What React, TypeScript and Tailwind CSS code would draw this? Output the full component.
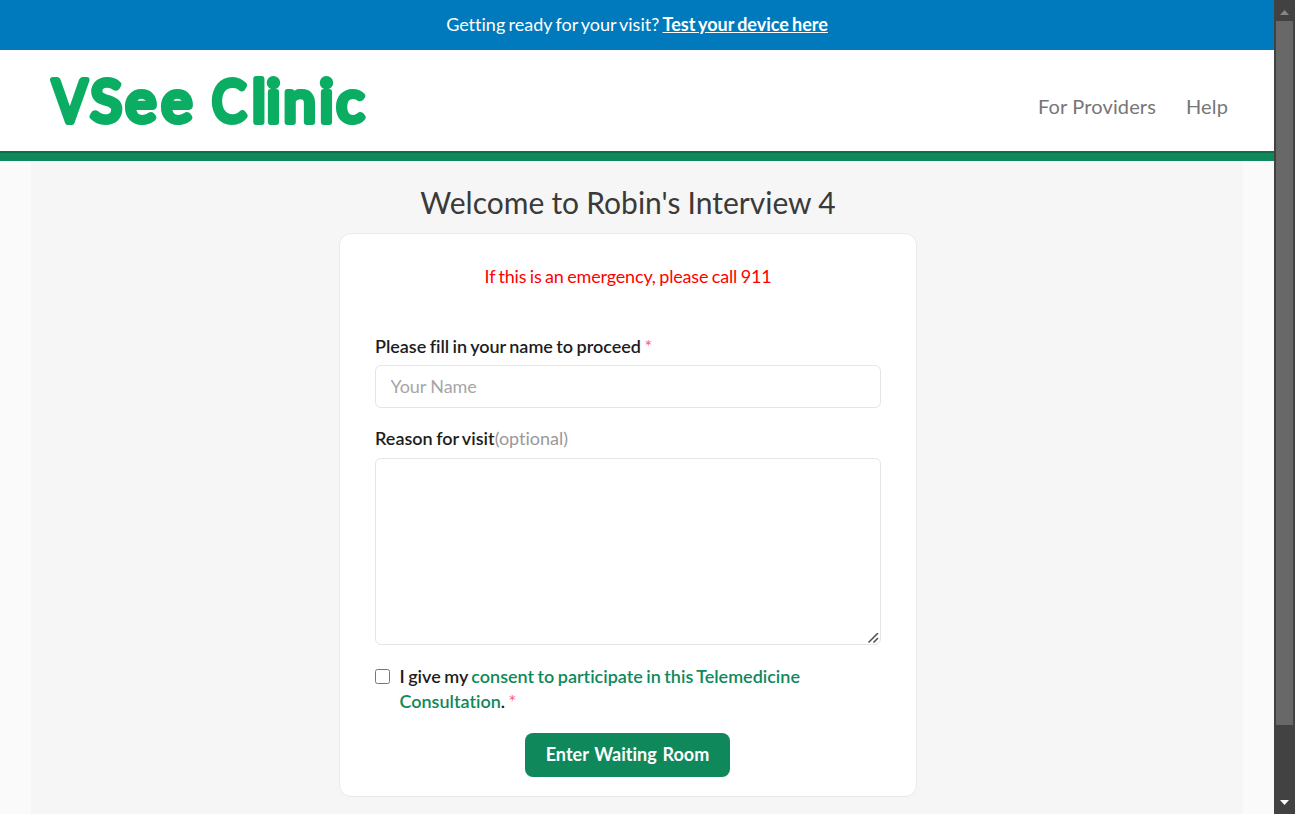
import React from "react";

function Logo() {
  return (
    <svg
      className="block h-[84px] w-[330px] overflow-visible"
      viewBox="0 0 330 84"
      fill="#0aad62"
      stroke="#0aad62"
      strokeWidth="6"
      strokeLinejoin="round"
      strokeLinecap="round"
      fontFamily="Lato, sans-serif"
      fontWeight="400"
      fontSize="58"
      role="img"
      aria-label="VSee Clinic"
    >
      <text transform="translate(4.500 62) scale(0.88 1)">V</text>
      <text x="42.500 77.500 113.500" y="62">See</text>
      <text transform="translate(164 62) scale(0.88 1)">C</text>
      <text x="204 218.500 235.500 271.500 288.500" y="62">linic</text>
    </svg>
  );
}

function Scrollbar() {
  return (
    <div className="flex h-full w-[21px] shrink-0 flex-col items-center bg-[#424242]">
      <div className="flex h-[21px] w-full items-center justify-center pt-[3px]">
        <svg width="9" height="5" viewBox="0 0 9 5" fill="#868686">
          <path d="M4.5 0 9 5H0Z" />
        </svg>
      </div>
      <div className="h-[704px] w-[17px] bg-[#686868]" />
      <div className="flex-1" />
      <div className="flex h-6 w-full items-center justify-center">
        <svg width="9" height="5" viewBox="0 0 9 5" fill="#ffffff">
          <path d="M0 0h9L4.500 5Z" />
        </svg>
      </div>
    </div>
  );
}

function Required() {
  return <span className="font-normal text-[#f95c6c]">*</span>;
}

export default function App() {
  return (
    <div className="flex h-[814px] w-[1295px] overflow-hidden bg-[#fafafa] font-['Lato',sans-serif] text-lg text-[#1d1d1d] [font-variant-ligatures:no-common-ligatures]">
      <div className="flex min-w-0 flex-1 flex-col">
        <div className="flex h-[50px] shrink-0 items-center justify-center bg-[#007abc] pb-0.5 text-white [word-spacing:-1.3px]">
          <p>
            Getting ready for your visit?{" "}
            <a href="#" className="font-bold underline">Test your device here</a>
          </p>
        </div>
        <header className="flex h-[101px] shrink-0 items-start justify-between bg-white pt-[10px] pr-[46px] pl-12">
          <Logo />
          <nav className="flex gap-[30px] pt-[31px] text-xl leading-[30px] tracking-[0.13px] text-[#767676]">
            <a href="#">For Providers</a>
            <a href="#">Help</a>
          </nav>
        </header>
        <div className="h-2.5 shrink-0 border-t-2 border-[#0b6e48] bg-[#0f885c]" />
        <main className="mx-[31px] flex flex-1 flex-col items-center bg-[#f6f6f6] pr-[18px]">
          <h1 className="mt-[21px] h-[51px] text-[30px] leading-[40px] text-[#3a3a3a] [word-spacing:-0.5px]">
            Welcome to Robin's Interview 4
          </h1>
          <form className="flex h-[564px] w-[578px] shrink-0 flex-col rounded-xl border border-[#e9e9e9] bg-white px-[35px] [word-spacing:-1px]">
            <p className="mt-[29px] text-center leading-[26px] tracking-[-0.16px] text-[#ff0000]">
              If this is an emergency, please call 911
            </p>
            <label className="mt-11 leading-[26px] font-semibold tracking-[-0.02px] [font-variant-ligatures:normal]">
              Please fill in your name to proceed <Required />
            </label>
            <input
              className="mt-1.5 h-[43px] shrink-0 rounded-md border border-[#e5e5e5] px-[14.5px] pb-0.5 tracking-[-0.1px] placeholder:text-[#a6a6a6]"
              placeholder="Your Name"
            />
            <label className="mt-[17px] leading-[26px] font-semibold">
              Reason for visit<span className="font-normal text-[#999999]">(optional)</span>
            </label>
            <div className="relative mt-[7px] h-[187px] shrink-0">
              <textarea className="block h-full w-full resize-none rounded-md border border-[#e5e5e5]" />
              <svg
                className="pointer-events-none absolute right-[2px] bottom-[2px]"
                width="11"
                height="10"
                viewBox="0 0 11 10"
                fill="none"
                stroke="#4d4d4d"
                strokeWidth="1.5"
              >
                <path d="M.5 9.500 10 0M5.500 9.500 10 5" />
              </svg>
            </div>
            <div className="mt-[19px] flex">
              <input type="checkbox" className="mt-[5px] mr-[9.5px] size-[15px] shrink-0" />
              <p className="w-[420px] leading-[25px] font-semibold tracking-[-0.01px]">
                I give my{" "}
                <a href="#" className="text-[#0f885c]">consent to participate in this Telemedicine Consultation</a>
                . <Required />
              </p>
            </div>
            <button
              type="button"
              className="mt-[19px] mr-px h-11 w-[205px] shrink-0 self-center rounded-lg bg-[#0f885c] pb-0.5 font-bold text-white [word-spacing:1.5px]"
            >
              Enter Waiting Room
            </button>
          </form>
        </main>
      </div>
      <Scrollbar />
    </div>
  );
}
